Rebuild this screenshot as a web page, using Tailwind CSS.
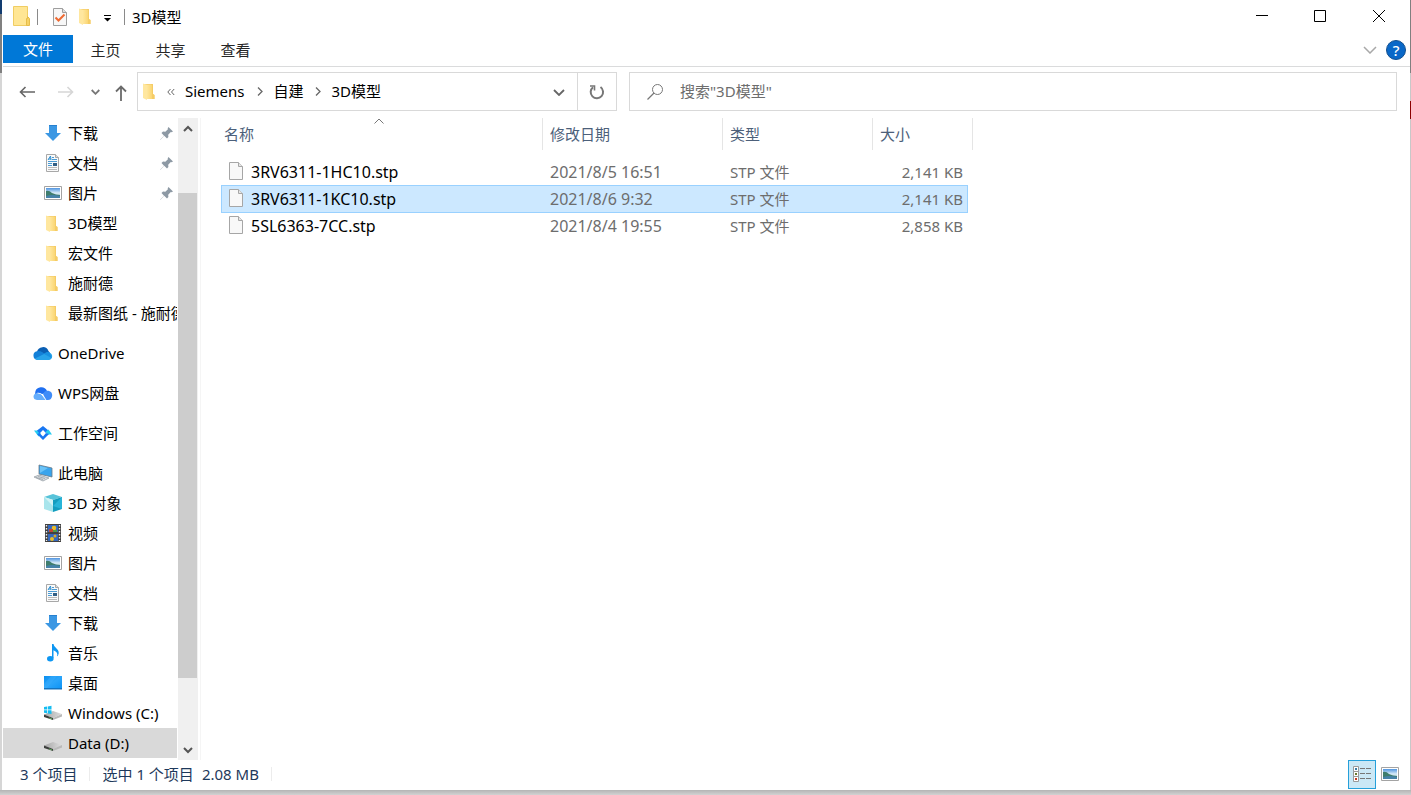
<!DOCTYPE html>
<html lang="zh-CN">
<head>
  <meta charset="UTF-8" />
  <title>3D模型</title>
  <meta name="viewport" content="width=device-width, initial-scale=1.0" />
  <script src="https://cdn.jsdelivr.net/npm/@tailwindcss/browser@4"></script>
</head>
<body class="flex flex-col h-screen overflow-hidden bg-[#c9c9c9] text-[15px] leading-5 text-black font-['Noto_Sans','Noto_Sans_CJK_SC',sans-serif]">

  <!-- Shared icons -->
  <svg class="absolute w-0 h-0" aria-hidden="true">
    <linearGradient id="gFolder" x1="0" x2="1"><stop offset="0" stop-color="#ffe69c" /><stop offset="1" stop-color="#fad674" /></linearGradient>
    <linearGradient id="gSky" x1="0" y1="0" x2="0" y2="1"><stop offset="0" stop-color="#4f94e0" /><stop offset=".5" stop-color="#d9ecf7" /><stop offset="1" stop-color="#8fb5c4" /></linearGradient>
    <linearGradient id="gDisk" x1="0" x2="1"><stop offset="0" stop-color="#a6a6a6" /><stop offset="1" stop-color="#dedede" /></linearGradient>
    <linearGradient id="gDesk" x1="0" y1="0" x2="1" y2="1"><stop offset="0" stop-color="#0b8ff0" /><stop offset=".5" stop-color="#2aa5fb" /><stop offset="1" stop-color="#0c93f5" /></linearGradient>
    <symbol id="folder" viewBox="0 0 12 17">
      <path d="M0 1h10v10l1.500 1v4H3L0 14z" fill="#f8d374" />
      <path d="M8 1h2v10l1.500 1v4H5z" fill="#f5cc66" />
      <path d="M0 .5 4 2v15L0 15z" fill="#ffe79f" />
      <path d="M4 2h5v14H4z" fill="url(#gFolder)" />
    </symbol>
    <symbol id="download" viewBox="0 0 18 18">
      <path d="M5 1h8v8h4l-8 8-8-8h4z" fill="#3b97e3" />
      <path d="M5 1h8v1H5z" fill="#2680cf" />
    </symbol>
    <symbol id="doc" viewBox="0 0 18 18">
      <path d="M2.500.5h9l3 3v14h-12z" fill="#fafafa" stroke="#a8a8a8" />
      <path d="M11.500.5v3h3" fill="#ddd" stroke="#a8a8a8" />
      <path d="m4 6 2.500-4 .5 4M4.500 5H7" fill="none" stroke="#2f8fd0" />
      <path d="M8 3.500h2M8 5.500h5M4 7.500h9M4 9.500h4M4 11.500h4" stroke="#4a9bd4" />
      <path d="M4 13.500h9M4 15.500h9" stroke="#bbb" />
      <path d="M9 9h4v3H9z" fill="#315f85" />
    </symbol>
    <symbol id="picture" viewBox="0 0 18 14">
      <path d="M.5.5h17v13H.5z" fill="#fff" stroke="#a3a3a3" />
      <path d="M2 2h14v10H2z" fill="url(#gSky)" />
      <path d="M2 5q3-1 6 2 4 2 8 2v1H2z" fill="#3f7d6d" />
      <path d="M2 10q7-2 14 0v2H2z" fill="#4682a8" />
    </symbol>
    <symbol id="pin" viewBox="0 0 13 13">
      <path d="M8.500 0 13 4.500l-1.500.8-.7-.2-2.600 2.600.2 2.300-1.400 1.500-2.800-2.800L.7 12.500 0 13l.5-.8 3.500-3.500L1.500 6 3 4.600l2.300.2 2.600-2.600L7.700 1.300z" fill="#8d99a4" />
    </symbol>
    <symbol id="disk" viewBox="0 0 18 10">
      <path d="M0 4.500 9 1l9 3-9 4z" fill="url(#gDisk)" />
      <path d="M0 4.500 9 8v2L0 7z" fill="#3d3f3d" />
      <path d="m9 8 9-4v2.500L9 10z" fill="#b9b9b9" />
      <path d="M5 7.500 8 8.600v.8L5 8.300z" fill="#63b35f" />
    </symbol>
    <symbol id="file" viewBox="0 0 14 18">
      <path d="M.5.5h9l4 4v13H.5z" fill="#f8f8f8" stroke="#a6a6a6" />
      <path d="M9.500.5v4h4" fill="#e6e6e6" stroke="#a6a6a6" />
    </symbol>
  </svg>

  <div class="flex flex-1 min-h-0">
    <!-- Sliver of the window behind -->
    <div class="flex flex-col w-0.5 shrink-0 bg-[#d6d6d6]">
      <div class="h-3.5 bg-[#123c70]"></div>
      <div class="h-[59px] bg-[#808080]"></div>
    </div>

    <div class="flex flex-col flex-1 min-w-0 pl-px bg-white">
      <!-- Title bar -->
      <header class="flex items-center h-[35px] shrink-0">
        <svg class="w-[18px] h-5 ml-2.5 mb-1" viewBox="0 0 18 20">
          <path d="M.5.5h14v19H.5z" fill="#ffe694" stroke="#f0cd63" />
          <path d="M13.500 19.500v-7h1v-2l2 2v7z" fill="#f6d266" stroke="#e6bd4a" />
        </svg>
        <span class="w-px h-4 ml-1.5 mb-0.5 bg-[#8a8a8a]"></span>
        <button class="ml-[15px] mb-0.5" aria-label="属性">
          <svg class="block w-3.5 h-[18px]" viewBox="0 0 14 18">
            <path d="M.5.5h9l4 4v13H.5z" fill="#f7f7f7" stroke="#9e9e9e" />
            <path d="M9.500.5v4h4" fill="#ddd" stroke="#9e9e9e" />
            <path d="m2.500 9.500 3 3 6-6" fill="none" stroke="#ee6a33" stroke-width="2" />
          </svg>
        </button>
        <button class="ml-3 mb-0.5" aria-label="新建文件夹"><svg class="block w-3 h-[17px]"><use href="#folder" /></svg></button>
        <button class="ml-3" aria-label="自定义快速访问工具栏">
          <svg class="block w-[9px] h-2" viewBox="0 0 9 8"><path d="M1 1.500h7" stroke="#000" /><path d="M1 4h7L4.500 7.500z" /></svg>
        </button>
        <span class="w-px h-4 ml-3 mb-0.5 bg-[#8a8a8a]"></span>
        <h1 class="ml-[7px] mb-0.5">3D模型</h1>
        <div class="flex ml-auto h-full">
          <button class="flex items-center justify-center w-[59px] h-8" aria-label="最小化"><svg class="w-3 h-3" viewBox="0 0 12 12"><path d="M0 5.500h12" stroke="#000" /></svg></button>
          <button class="flex items-center justify-center w-[58px] h-8" aria-label="最大化"><svg class="w-3 h-3" viewBox="0 0 12 12"><path d="M.5.5h11v11H.5z" fill="none" stroke="#000" /></svg></button>
          <button class="flex items-center justify-center w-[60px] h-8 mr-px" aria-label="关闭"><svg class="w-3 h-3" viewBox="0 0 12 12"><path d="m0 0 12 12M12 0 0 12" stroke="#000" /></svg></button>
        </div>
      </header>

      <!-- Ribbon tabs -->
      <nav class="flex h-8 pb-[3px] shrink-0 border-b border-[#dadbdc] text-[#262626]">
        <button class="w-[70px] bg-[#0078d7] text-white">文件</button>
        <button class="w-[65px] pt-0.5">主页</button>
        <button class="w-[65px] pt-0.5">共享</button>
        <button class="w-[65px] pt-0.5">查看</button>
        <div class="flex items-center gap-[9px] ml-auto mr-1">
          <button aria-label="展开功能区"><svg class="w-3.5 h-2 mt-0.5" viewBox="0 0 14 8"><path d="m1 1 6 6 6-6" fill="none" stroke="#a8a8a8" stroke-width="1.500" /></svg></button>
          <button class="flex items-center justify-center w-5 h-5 mt-0.5 rounded-full border border-[#14508f] bg-[#0a68c8] text-white font-medium" aria-label="帮助">?</button>
        </div>
      </nav>

      <!-- Address bar -->
      <div class="flex pt-[5px] pb-[7px] pr-[13px] shrink-0">
        <div class="flex items-center w-[134px] shrink-0 pl-4">
          <button aria-label="后退"><svg class="w-4 h-3" viewBox="0 0 16 12"><path d="M16 6H1.500M6.500 1l-5 5 5 5" fill="none" stroke="#666" stroke-width="1.600" /></svg></button>
          <button class="ml-[23px]" aria-label="前进"><svg class="w-4 h-3" viewBox="0 0 16 12"><path d="M0 6h14.500M9.500 1l5 5-5 5" fill="none" stroke="#d6d6d6" stroke-width="1.600" /></svg></button>
          <button class="ml-[17px]" aria-label="最近浏览的位置"><svg class="w-[9px] h-1.5" viewBox="0 0 9 6"><path d="m.7 1 3.800 3.800L8.300 1" fill="none" stroke="#777" stroke-width="1.800" /></svg></button>
          <button class="ml-[15px]" aria-label="上移"><svg class="w-3 h-4 mt-0.5" viewBox="0 0 12 16"><path d="M6 16V1.500M1 6.500l5-5 5 5" fill="none" stroke="#6b6b6b" stroke-width="1.800" /></svg></button>
        </div>
        <div class="flex items-center w-[480px] h-[39px] shrink-0 border border-[#d9d9d9]">
          <svg class="w-3 h-[17px] ml-[5px]"><use href="#folder" /></svg>
          <svg class="w-2 h-2 ml-3" viewBox="0 0 8 8"><path d="M3.500 1 .8 4l2.700 3M7.200 1 4.500 4l2.700 3" fill="none" stroke="#666" /></svg>
          <a href="#" class="ml-2.5 pb-0.5">Siemens</a>
          <svg class="w-1.5 h-[9px] ml-3" viewBox="0 0 6 9"><path d="m1 .5 4 4-4 4" fill="none" stroke="#666" stroke-width="1.300" /></svg>
          <a href="#" class="ml-[11px] pb-0.5">自建</a>
          <svg class="w-1.5 h-[9px] ml-[11px]" viewBox="0 0 6 9"><path d="m1 .5 4 4-4 4" fill="none" stroke="#666" stroke-width="1.300" /></svg>
          <a href="#" class="ml-[11px] pb-0.5">3D模型</a>
          <button class="flex items-center justify-center w-9 h-full ml-auto" aria-label="以前的位置"><svg class="w-3 h-[7px] mt-0.5" viewBox="0 0 12 7"><path d="m1 1 5 5 5-5" fill="none" stroke="#666" stroke-width="1.800" /></svg></button>
          <button class="flex items-center justify-center w-[39px] h-full border-l border-[#d9d9d9]" aria-label="刷新">
            <svg class="w-4 h-4" viewBox="0 0 16 16"><path d="M11.500 3A6.200 6.200 0 1 1 4 3.200" fill="none" stroke="#777" stroke-width="2" /><path d="M1 2h4.500v4.500" fill="none" stroke="#777" stroke-width="1.600" /></svg>
          </button>
        </div>
        <label class="flex items-center flex-1 min-w-0 ml-3 pl-[17px] border border-[#d9d9d9]">
          <svg class="w-4 h-4 shrink-0" viewBox="0 0 16 16"><circle cx="10.500" cy="5.500" r="5" fill="none" stroke="#777" /><path d="M7 9 .5 15.500" stroke="#777" stroke-width="1.200" /></svg>
          <input type="search" aria-label="搜索" placeholder='搜索"3D模型"' class="flex-1 min-w-0 ml-[17px] pb-0.5 outline-none placeholder:text-[#6d6d6d]" />
        </label>
      </div>

      <main class="flex flex-1 min-h-0">
        <!-- Navigation pane -->
        <nav class="w-[174px] shrink-0 overflow-hidden whitespace-nowrap">
          <ul>
            <li><a href="#" class="flex items-center h-[30px] pl-[41px] pr-1"><svg class="w-[18px] h-[18px] mr-1.5"><use href="#download" /></svg>下载<svg class="w-[13px] h-[13px] ml-auto"><use href="#pin" /></svg></a></li>
            <li><a href="#" class="flex items-center h-[30px] pl-[41px] pr-1"><svg class="w-[18px] h-[18px] mr-1.5"><use href="#doc" /></svg>文档<svg class="w-[13px] h-[13px] ml-auto"><use href="#pin" /></svg></a></li>
            <li><a href="#" class="flex items-center h-[30px] pl-[41px] pr-1"><svg class="w-[18px] h-3.5 mr-1.5"><use href="#picture" /></svg>图片<svg class="w-[13px] h-[13px] ml-auto"><use href="#pin" /></svg></a></li>
            <li><a href="#" class="flex items-center h-[30px] pl-[43px]"><svg class="w-3 h-[17px] mr-2.5 shrink-0"><use href="#folder" /></svg>3D模型</a></li>
            <li><a href="#" class="flex items-center h-[30px] pl-[43px]"><svg class="w-3 h-[17px] mr-2.5 shrink-0"><use href="#folder" /></svg>宏文件</a></li>
            <li><a href="#" class="flex items-center h-[30px] pl-[43px]"><svg class="w-3 h-[17px] mr-2.5 shrink-0"><use href="#folder" /></svg>施耐德</a></li>
            <li><a href="#" class="flex items-center h-[30px] pl-[43px]"><svg class="w-3 h-[17px] mr-2.5 shrink-0"><use href="#folder" /></svg>最新图纸 - 施耐德</a></li>
            <li class="mt-2.5"><a href="#" class="flex items-center h-[30px] pl-[30px]">
              <svg class="w-5 h-[13px] mr-[5px]" viewBox="0 0 20 13">
                <path d="M4 5a6 6 0 0 1 11.500-1L17 6l-6 3z" fill="#0a5fb4" />
                <path d="M4.500 13A4.400 4.400 0 0 1 4 4.300q2.500-.8 5 .8l5 3.200L7 13z" fill="#1380d8" />
                <path d="M4.500 13h11.700a3.800 3.800 0 0 0 .4-7.300Q14 4.500 11 7l-9 4.500q1 1.400 2.500 1.500" fill="#28a3ea" />
                <path d="M11 7q3-3 5.600-1.300l2 5.300z" fill="#178fe0" />
              </svg>OneDrive</a></li>
            <li class="mt-2.5"><a href="#" class="flex items-center h-[30px] pl-[30px]">
              <svg class="w-5 h-[13px] mr-[5px]" viewBox="0 0 20 13">
                <path d="M2 7Q2 1 7.500.3 12-.3 14 4l-4 3-3-.5z" fill="#1f6ff0" />
                <path d="M10 7q2-4 5.500-3.200 4 1 3.700 5Q18.500 13 15 13h-2z" fill="#3f8cf8" />
                <path d="M4 13Q.5 12.500.5 9.500.8 6 5 6q3 0 4.500 2.500l3.500 4.500z" fill="#65adfb" />
                <path d="M4.500 6q4 0 5.500 3l3 4" fill="none" stroke="#fff" stroke-width=".8" />
              </svg>WPS网盘</a></li>
            <li class="mt-2.5"><a href="#" class="flex items-center h-[30px] pl-[30px]">
              <svg class="w-5 h-3.5 mr-[5px]" viewBox="0 0 20 14">
                <path d="M1 4.500h4l3 3.500-2.500 2.500z" fill="#25ccf0" />
                <path d="M4 4.500 10 0l5.500 4.500L13 7l-3-3-3.500 3.500z" fill="#1876f2" />
                <path d="m12.500 6 3-2.500L19 8.500h-4z" fill="#25ccf0" />
                <path d="m16 8-6 6-6-6 2.500-1L10 10.500 13 7z" fill="#1876f2" />
              </svg>工作空间</a></li>
            <li class="mt-2.5"><a href="#" class="flex items-center h-[30px] pl-[30px]">
              <svg class="w-5 h-[18px] mr-[5px]" viewBox="0 0 20 18">
                <path d="m6 1 13 3v9L6 10z" fill="#3aa4ec" stroke="#6a7885" stroke-width=".8" />
                <path d="m7 2 8 2-8 5z" fill="#6bc3f7" />
                <path d="m1 13 5-2 10 3-6 3z" fill="#d9dde0" stroke="#8f989f" stroke-width=".7" />
                <path d="m3 13.500 7 2M5 12.500l7 2" stroke="#8f989f" stroke-width=".7" />
              </svg>此电脑</a></li>
            <li><a href="#" class="flex items-center h-[30px] pl-[41px]">
              <svg class="w-[18px] h-[18px] mr-1.5" viewBox="0 0 18 18">
                <path d="m9 0 9 3-9 3-9-3z" fill="#58c3d9" />
                <path d="m0 3 9 3v12l-9-3z" fill="#a9e5ec" />
                <path d="m18 3-9 3v12l9-3z" fill="#139dbf" />
                <path d="m0 3 9 3v6z" fill="#d2f3f5" />
                <path d="m9 12 9-9v12z" fill="#27b4d8" />
              </svg>3D 对象</a></li>
            <li><a href="#" class="flex items-center h-[30px] pl-[41px]">
              <svg class="w-[18px] h-[18px] mr-1.5" viewBox="0 0 18 18">
                <path d="M1 0h16v18H1z" fill="#414141" />
                <path d="M4 1h10v7H4zM4 10h10v7H4z" fill="#3468be" />
                <path d="M2.500 1v16M15.500 1v16" stroke="#eee" stroke-width="1.400" stroke-dasharray="1.500 1.500" />
                <circle cx="10" cy="4" r="2.300" fill="#e9bd28" /><path d="M5 5h4v3H5z" fill="#c44431" /><path d="M9 6h4v2H9z" fill="#4f9b44" />
                <circle cx="8" cy="15" r="2" fill="#e9bd28" /><circle cx="11" cy="12" r="1.500" fill="#d8a927" />
              </svg>视频</a></li>
            <li><a href="#" class="flex items-center h-[30px] pl-[41px]"><svg class="w-[18px] h-3.5 mr-1.5"><use href="#picture" /></svg>图片</a></li>
            <li><a href="#" class="flex items-center h-[30px] pl-[41px]"><svg class="w-[18px] h-[18px] mr-1.5"><use href="#doc" /></svg>文档</a></li>
            <li><a href="#" class="flex items-center h-[30px] pl-[41px]"><svg class="w-[18px] h-[18px] mr-1.5"><use href="#download" /></svg>下载</a></li>
            <li><a href="#" class="flex items-center h-[30px] pl-[41px]">
              <svg class="w-[18px] h-[18px] mr-1.5" viewBox="0 0 18 18">
                <path d="M8 0h1.500q.3 2.500 3 4.500 3.500 3 1.500 7-.3.600-1 .8 1.500-4-3.500-6V14H8z" fill="#0d96f2" />
                <ellipse cx="6.300" cy="14.800" rx="3.300" ry="2.700" fill="#0d96f2" />
              </svg>音乐</a></li>
            <li><a href="#" class="flex items-center h-[30px] pl-[41px]">
              <svg class="w-[18px] h-3.5 mr-1.5" viewBox="0 0 18 14"><path d="M0 0h18v13H0z" fill="url(#gDesk)" /><path d="M0 12h18v1.500H0z" fill="#1273c0" /><path d="M7 0h6L3 12H0V8z" fill="#4db6ff" opacity=".3" /></svg>桌面</a></li>
            <li><a href="#" class="flex items-center h-[30px] pl-[41px]">
              <svg class="w-[18px] h-4 mr-1.5" viewBox="0 0 18 16"><use href="#disk" y="5" width="18" height="10" /><path d="m0 2 3-.5v3H0zM3.700 1.400 7.500.8v3.700H3.700zM0 5.200h3v3L0 7.800zM3.700 5.200h3.800V9l-3.800-.6z" fill="#15bdf2" /></svg>Windows (C:)</a></li>
            <li><a href="#" class="flex items-center h-[30px] pl-[41px] bg-[#d9d9d9]"><svg class="w-[18px] h-2.5 mr-1.5 mt-1.5"><use href="#disk" /></svg>Data (D:)</a></li>
          </ul>
        </nav>

        <!-- Scroll bar -->
        <div class="flex flex-col w-5 ml-px pr-px shrink-0 bg-[#f0f0f0]">
          <button class="flex items-center justify-center h-5 shrink-0" aria-label="向上滚动"><svg class="w-2.5 h-[7px]" viewBox="0 0 10 7"><path d="m1 6 4-4 4 4" fill="none" stroke="#555" stroke-width="2" /></svg></button>
          <div class="flex-[55]"></div>
          <div class="flex-[485] bg-[#cdcdcd]"></div>
          <div class="flex-[62]"></div>
          <button class="flex items-center justify-center h-5 shrink-0" aria-label="向下滚动"><svg class="w-2.5 h-[7px]" viewBox="0 0 10 7"><path d="m1 1 4 4 4-4" fill="none" stroke="#555" stroke-width="2" /></svg></button>
        </div>

        <!-- File list -->
        <section class="flex-1 min-w-0 ml-0.5 pl-5 border-l border-[#f5f5f5]">
          <table class="table-fixed w-[752px] border-separate border-spacing-0 text-left text-[#6d6d6d]">
            <colgroup>
              <col class="w-[322px]" />
              <col class="w-[180px]" />
              <col class="w-[150px]" />
              <col class="w-[95px]" />
              <col class="w-[5px]" />
            </colgroup>
            <thead class="text-[#4c607a]">
              <tr>
                <th class="relative p-0 pb-2 font-normal">
                  <svg class="absolute left-[153px] top-0 w-2.5 h-1.5" viewBox="0 0 10 6"><path d="m.5 5.500 4.500-4.500 4.500 4.500" fill="none" stroke="#777" /></svg>
                  <div class="flex items-center h-8 pl-[3px] border-r border-[#e5e5e5]">名称</div>
                </th>
                <th class="p-0 pb-2 font-normal"><div class="flex items-center h-8 pl-[7px] border-r border-[#e5e5e5]">修改日期</div></th>
                <th class="p-0 pb-2 font-normal"><div class="flex items-center h-8 pl-[7px] border-r border-[#e5e5e5]">类型</div></th>
                <th class="p-0 pb-2 font-normal" colspan="2"><div class="flex items-center h-8 pl-[7px] border-r border-[#e5e5e5]">大小</div></th>
              </tr>
            </thead>
            <tbody>
              <tr class="h-[27px]">
                <td class="p-0 text-base leading-5 text-black"><div class="flex items-center pl-2"><svg class="w-3.5 h-[18px] mr-2 mb-0.5"><use href="#file" /></svg>3RV6311-1HC10.stp</div></td>
                <td class="p-0 pl-[7px] text-base leading-5">2021/8/5 16:51</td>
                <td class="p-0 pl-[7px]">STP 文件</td>
                <td class="p-0 pr-[5px] text-right">2,141 KB</td>
                <td class="p-0"></td>
              </tr>
              <tr class="h-7">
                <td class="p-0 border-y border-l border-[#99d1ff] bg-[#cce8ff] text-base leading-5 text-black"><div class="flex items-center pl-[7px]"><svg class="w-3.5 h-[18px] mr-2 mb-0.5"><use href="#file" /></svg>3RV6311-1KC10.stp</div></td>
                <td class="p-0 pl-[7px] border-y border-[#99d1ff] bg-[#cce8ff] text-base leading-5">2021/8/6 9:32</td>
                <td class="p-0 pl-[7px] border-y border-[#99d1ff] bg-[#cce8ff]">STP 文件</td>
                <td class="p-0 pr-1 border-y border-r border-[#99d1ff] bg-[#cce8ff] text-right">2,141 KB</td>
                <td class="p-0"></td>
              </tr>
              <tr class="h-[26px]">
                <td class="p-0 text-base leading-5 text-black"><div class="flex items-center pl-2"><svg class="w-3.5 h-[18px] mr-2 mb-0.5"><use href="#file" /></svg>5SL6363-7CC.stp</div></td>
                <td class="p-0 pl-[7px] text-base leading-5">2021/8/4 19:55</td>
                <td class="p-0 pl-[7px]">STP 文件</td>
                <td class="p-0 pr-[5px] text-right">2,858 KB</td>
                <td class="p-0"></td>
              </tr>
            </tbody>
          </table>
        </section>
      </main>

      <!-- Status bar -->
      <footer class="flex items-center h-[30px] shrink-0 pb-0.5 pl-[17px] pr-[11px] text-[#1e395b]">
        <span>3 个项目</span>
        <span class="w-px h-3.5 mx-3 bg-[#ececec]"></span>
        <span>选中 1 个项目</span>
        <span class="ml-2">2.08 MB</span>
        <span class="w-px h-3.5 ml-3 bg-[#ececec]"></span>
        <button class="flex items-center justify-center w-7 h-[29px] ml-auto border border-[#26a0da] bg-[#cbe8f6]" aria-label="详细信息">
          <svg class="w-[18px] h-4" viewBox="0 0 18 16">
            <path d="M.5.5h5v5h-5zM.5 5.500h5v5h-5zM.5 10.500h5v5h-5z" fill="#fff" stroke="#999" />
            <path d="M2 2h2v2H2z" fill="#3a7ca5" /><path d="M2 7h2v2H2z" fill="#6a7a30" /><path d="M2 12h2v2H2z" fill="#c23a22" />
            <path d="M7 2.500h5M13 2.500h5M7 7.500h5M13 7.500h5M7 12.500h5M13 12.500h5" stroke="#777" />
          </svg>
        </button>
        <button class="ml-[5px]" aria-label="大缩略图"><svg class="block w-[18px] h-3.5"><use href="#picture" /></svg></button>
      </footer>
    </div>

    <div class="flex flex-col w-px shrink-0 bg-[#c8c8c8]">
      <div class="h-[73px] bg-[#808080]"></div>
      <div class="h-7"></div>
      <div class="h-[18px] bg-[#8b0000]"></div>
    </div>
  </div>
  <div class="h-[5px] shrink-0 bg-linear-to-b from-[#b4b4b4] to-[#d2d2d2]"></div>
</body>
</html>
